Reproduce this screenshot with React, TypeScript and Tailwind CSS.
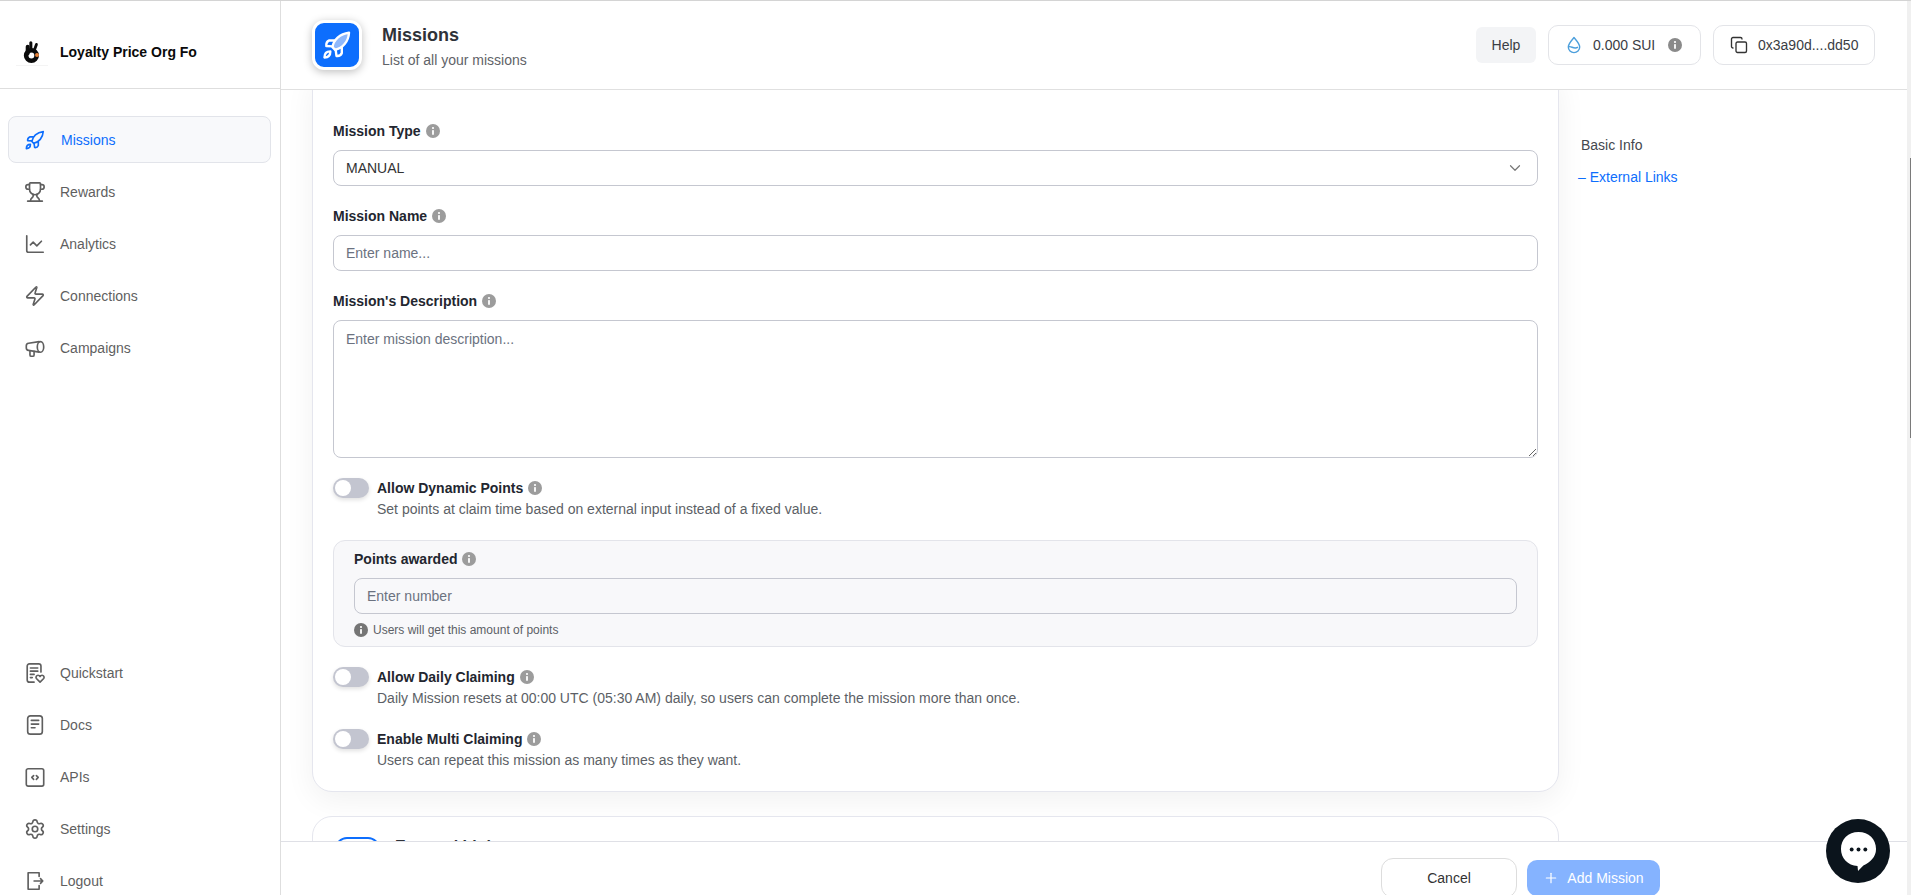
import React from "react";
import { Trophy, ChartLine, Zap, Settings, Copy, ChevronDown, Plus } from "lucide-react";

const RocketIcon = ({ className = "", fill = "none" }: { className?: string; fill?: string }) => (
  <svg viewBox="0 0 24 24" fill="none" stroke="currentColor" strokeWidth="1.8" strokeLinejoin="round" strokeLinecap="round" className={className}>
    <path d="M8.6 13.6C9.4 8.2 14 3.6 21 2.8C20.6 9.6 16.2 14.4 10.6 15.6Z" fill={fill} />
    <path d="M10 8.6H6.2C4.8 9.2 3.8 10.8 4 12.8L8.6 13" />
    <path d="M15.6 13.8V18C15 19.6 13.4 20.4 11.6 20.2L11 15.6" />
    <path d="M2.6 21.4C2.6 18.6 4.2 16.8 7 16.8C7 19.6 5.4 21.2 2.6 21.4Z" />
  </svg>
);

const iconCls = "w-[22px] h-[22px] shrink-0";

const Megaphone = () => (
  <svg viewBox="0 0 24 24" fill="none" stroke="currentColor" strokeWidth="1.8" strokeLinejoin="round" strokeLinecap="round" className={iconCls}>
    <path d="M16.5 5L5 6.8C3.6 7 2.5 8 2.5 9.5V12C2.5 13.5 3.6 14.5 5 14.6L16.5 16.5" />
    <ellipse cx="18" cy="10.8" rx="3.5" ry="5.8" />
    <path d="M6.5 15V19.5C6.5 20.5 7 21 8 21H9.5C10.5 21 11 20.5 11 19.5V15.5" />
  </svg>
);
const Quickstart = () => (
  <svg viewBox="0 0 24 24" fill="none" stroke="currentColor" strokeWidth="1.8" strokeLinejoin="round" strokeLinecap="round" className={iconCls}>
    <path d="M11 22H6C4.500 22 3.500 21 3.500 19.500V4.500C3.500 3 4.500 2 6 2H16C17.500 2 18.500 3 18.500 4.500V11" />
    <path d="M7 6.500H15M7 10H15M7 13.500H11M7 17H9" />
    <path d="M17.500 22L13.500 18C12.500 16.500 13.500 14.500 15.300 14.500C16.300 14.500 17 15 17.500 15.800C18 15 18.700 14.500 19.700 14.500C21.500 14.500 22.500 16.500 21.500 18Z" />
  </svg>
);
const Docs = () => (
  <svg viewBox="0 0 24 24" fill="none" stroke="currentColor" strokeWidth="1.8" strokeLinejoin="round" strokeLinecap="round" className={iconCls}>
    <rect x="4" y="2" width="16" height="20" rx="3" />
    <path d="M8 7H16M8 11H16M8 15H12" />
  </svg>
);
const Apis = () => (
  <svg viewBox="0 0 24 24" fill="none" stroke="currentColor" strokeWidth="1.8" strokeLinejoin="round" strokeLinecap="round" className={iconCls}>
    <rect x="2.500" y="3" width="19" height="19" rx="2" />
    <path d="M10.500 10.500L8.500 12.500L10.500 14.500M13.500 10.500L15.500 12.500L13.500 14.500" />
  </svg>
);
const Logout = () => (
  <svg viewBox="0 0 24 24" fill="none" stroke="currentColor" strokeWidth="1.8" strokeLinejoin="round" strokeLinecap="round" className={iconCls}>
    <path d="M16.500 7V3H4.500V21H16.500V17" />
    <path d="M11 12H20.500M18 9.500L20.500 12L18 14.500" />
  </svg>
);
const Sui = () => (
  <svg viewBox="0 0 16 20" className="w-[14px] h-[18px]" fill="none" stroke="#4c9fdc" strokeWidth="1.6" strokeLinejoin="round">
    <path d="M8 1.500C11 5.200 14.500 8.500 14.500 12.300C14.500 16 11.600 18.700 8 18.700C4.400 18.700 1.500 16 1.500 12.300C1.500 8.500 5 5.200 8 1.500Z" />
    <path d="M1.800 12.200C4.500 10.500 8 15.500 12.500 12.500" />
  </svg>
);
const Info = ({ color = "#9c9c9c" }: { color?: string }) => (
  <svg viewBox="0 0 14 14" className="w-[14px] h-[14px] shrink-0">
    <circle cx="7" cy="7" r="7" fill={color} />
    <rect x="6.100" y="6" width="1.800" height="4.800" rx="0.400" fill="#fff" />
    <circle cx="7" cy="4" r="1.100" fill="#fff" />
  </svg>
);
const Hand = () => (
  <svg viewBox="0 0 24 24" className="w-7 h-7 shrink-0">
    <g fill="none" stroke="#0b0b0b" strokeLinecap="round">
      <circle cx="11.500" cy="15" r="4.500" strokeWidth="4" />
      <path d="M8.300 13V7.500" strokeWidth="3.400" />
      <path d="M11 11V4" strokeWidth="2.600" />
      <path d="M14 10.500L15.800 5.500" strokeWidth="2.400" />
    </g>
    <circle cx="16.300" cy="14.500" r="1.700" fill="#e8833a" />
  </svg>
);

const NavItem = ({ icon, label, active = false }: { icon: React.ReactNode; label: string; active?: boolean }) => (
  <div
    className={
      active
        ? "flex items-center h-[47px] w-[263px] mx-2 pl-4 gap-4 rounded-lg border border-[#e2e4ea] bg-[#f8f9fb] text-[#0d6efd] text-sm"
        : "flex items-center h-[47px] w-[263px] mx-2 pl-4 gap-[15px] rounded-lg border border-transparent text-[#5f5f5f] text-sm"
    }
  >
    <span className="w-5 h-5 flex items-center justify-center shrink-0">{icon}</span>
    <span>{label}</span>
  </div>
);

const Label = ({ children }: { children: string }) => (
  <div className="flex items-center gap-[5px] h-5 text-sm font-bold text-[#23262f]">
    <span>{children}</span>
    <Info />
  </div>
);

const Toggle = ({ title, desc }: { title: string; desc: string }) => (
  <div className="flex gap-2">
    <div className="w-9 h-5 rounded-full bg-[#c3c5d0] shadow-[0_2px_4px_rgba(0,0,0,0.12)] p-[2px] shrink-0">
      <div className="w-4 h-4 rounded-full bg-white" />
    </div>
    <div>
      <Label>{title}</Label>
      <div className="text-sm leading-5 mt-px text-[#5c5f66]">{desc}</div>
    </div>
  </div>
);

const inputCls =
  "block w-full h-9 rounded-lg border border-[#c5c7d0] bg-transparent px-3 text-sm text-[#333] placeholder:text-[#6b7280] outline-none";

export default function App() {
  return (
    <div className="h-[895px] w-full flex overflow-hidden bg-white border-t border-[#d4d4d4] font-['Liberation_Sans',Arial,sans-serif] relative">
      <aside className="w-[280px] shrink-0 h-full flex flex-col overflow-hidden">
        <div className="h-[88px] shrink-0 border-b border-[#dedede] flex items-center pt-[15px]">
          <div className="ml-4 w-8 h-7 border-b border-[#f4f4f4] flex items-center justify-center">
            <Hand />
          </div>
          <span className="ml-3 text-sm font-bold text-[#0a0a0a]">Loyalty Price Org Fo</span>
        </div>
        <nav className="flex flex-col gap-[5px] pt-[27px]">
          <NavItem active label="Missions" icon={<RocketIcon className={iconCls} />} />
          <NavItem label="Rewards" icon={<Trophy className={iconCls} strokeWidth={1.8} />} />
          <NavItem label="Analytics" icon={<ChartLine className={iconCls} strokeWidth={1.8} />} />
          <NavItem label="Connections" icon={<Zap className={iconCls} strokeWidth={1.8} />} />
          <NavItem label="Campaigns" icon={<Megaphone />} />
        </nav>
        <nav className="flex flex-col gap-[5px] mt-auto -mb-[9px]">
          <NavItem label="Quickstart" icon={<Quickstart />} />
          <NavItem label="Docs" icon={<Docs />} />
          <NavItem label="APIs" icon={<Apis />} />
          <NavItem label="Settings" icon={<Settings className={iconCls} strokeWidth={1.8} />} />
          <NavItem label="Logout" icon={<Logout />} />
        </nav>
      </aside>

      <main className="flex-1 min-w-0 h-full flex flex-col border-l border-[#dedede]">
        <header className="h-[89px] shrink-0 border-b border-[#e0e0e0] flex items-center justify-between pl-[31px] pr-8">
          <div className="flex items-center gap-5">
            <div className="w-[50px] h-[50px] rounded-xl bg-[#0d6efd] border-[3px] border-white shadow-[0_2px_8px_rgba(0,0,0,0.25)] flex items-center justify-center text-white">
              <RocketIcon className="w-[32px] h-[32px] shrink-0" fill="#8fb8fb" />
            </div>
            <div className="pt-[3px]">
              <div className="text-lg leading-6 font-bold text-[#2f3238]">Missions</div>
              <div className="text-sm leading-5 mt-[3px] text-[#5f6368]">List of all your missions</div>
            </div>
          </div>
          <div className="flex items-center gap-3 text-sm text-[#3a3d44]">
            <div className="w-[60px] h-9 rounded-md bg-[#f3f4f6] flex items-center justify-center">Help</div>
            <div className="w-[153px] h-10 rounded-[10px] border border-[#e3e4e8] flex items-center pl-[18px] gap-3">
              <Sui />
              <span>0.000 SUI</span>
              <span className="ml-px"><Info color="#8a8a8a" /></span>
            </div>
            <div className="w-[162px] h-10 rounded-[10px] border border-[#e3e4e8] flex items-center pl-[16px] gap-[10px]">
              <Copy className="w-[18px] h-[18px] text-[#333]" strokeWidth={1.8} />
              <span>0x3a90d....dd50</span>
            </div>
          </div>
        </header>

        <div className="flex-1 min-h-0 overflow-hidden flex pl-[31px]">
          <div className="w-[1247px] shrink-0">
            <section className="-mt-[20px] rounded-[20px] border border-[#e5e6ee] bg-white shadow-[0_8px_30px_rgba(0,0,0,0.06)] px-5 pt-[50px] pb-[21px]">
              <Label>Mission Type</Label>
              <div className="mt-[9px] h-9 rounded-lg border border-[#c5c7d0] pl-3 pr-[13px] flex items-center justify-between text-sm text-[#333]">
                <span>MANUAL</span>
                <ChevronDown className="w-[18px] h-[18px] text-[#777]" strokeWidth={1.6} />
              </div>
              <div className="mt-5"><Label>Mission Name</Label></div>
              <input className={"mt-[9px] " + inputCls} placeholder="Enter name..." readOnly />
              <div className="mt-5"><Label>Mission's Description</Label></div>
              <textarea
                className="mt-[9px] block w-full h-[138px] rounded-lg border border-[#c5c7d0] px-3 py-2 text-sm text-[#333] placeholder:text-[#6b7280] outline-none"
                placeholder="Enter mission description..."
                readOnly
              />
              <div className="mt-5">
                <Toggle title="Allow Dynamic Points" desc="Set points at claim time based on external input instead of a fixed value." />
              </div>
              <div className="mt-[21px] h-[107px] rounded-xl border border-[#e3e4ea] bg-[#f8f8fa] px-5 pt-[8px]">
                <Label>Points awarded</Label>
                <input className={"mt-[9px] " + inputCls} placeholder="Enter number" readOnly />
                <div className="mt-2 flex items-center gap-[5px] text-xs leading-4 text-[#5c5f66]">
                  <Info color="#757575" />
                  <span>Users will get this amount of points</span>
                </div>
              </div>
              <div className="mt-5">
                <Toggle title="Allow Daily Claiming" desc="Daily Mission resets at 00:00 UTC (05:30 AM) daily, so users can complete the mission more than once." />
              </div>
              <div className="mt-[21px]">
                <Toggle title="Enable Multi Claiming" desc="Users can repeat this mission as many times as they want." />
              </div>
            </section>
            <section className="mt-6 rounded-[20px] border border-[#e5e6ee] bg-white px-[22px] pt-5">
              <div className="flex items-start gap-[15px]">
                <div className="w-[45px] h-[44px] shrink-0 rounded-xl border-2 border-[#0d6efd]" />
                <div className="-mt-[2px] text-base leading-6 font-bold text-[#2f3238]">External Links</div>
              </div>
            </section>
          </div>
          <div className="flex-1 pt-[45px] pl-[19px] text-sm leading-5">
            <div className="ml-[3px] text-[#44474e]">Basic Info</div>
            <div className="mt-3 text-[#0d6efd]">– External Links</div>
          </div>
        </div>

        <footer className="h-[54px] shrink-0 border-t border-[#dfe0e6] bg-white overflow-hidden flex items-start justify-end gap-[10px] pt-4 pr-[247px] relative">
          <div className="w-[136px] h-10 rounded-xl border border-[#dddddd] flex items-center justify-center text-sm text-[#333]">Cancel</div>
          <div className="w-[133px] h-9 mt-[2px] rounded-[10px] bg-[#85b3ff] flex items-center justify-center gap-2 text-sm text-white">
            <Plus className="w-4 h-4" strokeWidth={1.8} />
            <span>Add Mission</span>
          </div>
        </footer>
      </main>

      <div className="w-1 shrink-0 h-full bg-[#f0f0f0]">
        <div className="mt-[157px] ml-[3px] w-px h-[280px] bg-[#7a7a7a]" />
      </div>

      <div className="absolute right-[21px] bottom-[12px] w-16 h-16 rounded-full bg-[#0b141c] flex items-center justify-center">
        <svg viewBox="0 0 38 42" className="w-[37px] h-[41px]">
          <path d="M19 1C29.500 1 37 8.500 37 18.500C37 27 31 32 24 35.500L18.500 41L18 35.800C8 35.500 1 28 1 18.500C1 8.500 8.500 1 19 1Z" fill="#fff" />
          <circle cx="12" cy="19" r="2" fill="#0b141c" />
          <circle cx="19" cy="19" r="2" fill="#0b141c" />
          <circle cx="26" cy="19" r="2" fill="#0b141c" />
        </svg>
      </div>
    </div>
  );
}
